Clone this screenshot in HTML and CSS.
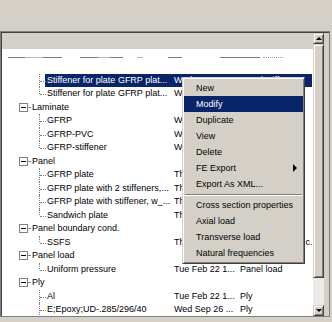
FILE: index.html
```html
<!DOCTYPE html>
<html lang="en">
<head>
    <meta charset="UTF-8">
    <title>Model tree</title>
    <link rel="stylesheet" href="styles.css">
</head>
<body>
    <div class="top"></div>
    <div class="frame">
        <div class="inner">
            <div class="view">
                <div class="header"></div>
                <div class="rows">
                    <div class="ghost">
                        <span class="seg dark" style="width:17px"></span>
                        <span class="seg light" style="width:18px"></span>
                        <span class="seg dark" style="width:19px"></span>
                        <span class="seg gap" style="width:18px"></span>
                        <span class="seg dark" style="width:18px"></span>
                        <span class="seg light" style="width:12px"></span>
                        <span class="seg dark" style="width:13px"></span>
                        <span class="seg gap" style="width:14px"></span>
                        <span class="seg light" style="width:6px"></span>
                        <span class="seg gap" style="width:25px"></span>
                        <span class="seg dark" style="width:14px"></span>
                        <span class="seg gap" style="width:38px"></span>
                        <span class="seg dark" style="width:40px"></span>
                        <span class="seg gap" style="width:3px"></span>
                        <span class="seg dots" style="width:20px"></span>
                    </div>
                    <div class="row sel">
                        <div class="tree"><span class="twig"></span><span class="label">Stiffener for plate GFRP plat...</span></div>
                        <div class="cell">Wed Sep 26 ...</div>
                        <div class="cell">Panel stiff...</div>
                    </div>
                    <div class="row">
                        <div class="tree"><span class="twig last"></span><span class="label">Stiffener for plate GFRP plat...</span></div>
                        <div class="cell">Wed Sep 26 ...</div>
                        <div class="cell">Panel stiff...</div>
                    </div>
                    <div class="row">
                        <div class="tree"><span class="node"><span class="box"></span></span><span class="label">Laminate</span></div>
                        <div class="cell"></div>
                        <div class="cell"></div>
                    </div>
                    <div class="row">
                        <div class="tree"><span class="twig"></span><span class="label">GFRP</span></div>
                        <div class="cell">Wed Sep 26 ...</div>
                        <div class="cell">Laminate</div>
                    </div>
                    <div class="row">
                        <div class="tree"><span class="twig"></span><span class="label">GFRP-PVC</span></div>
                        <div class="cell">Wed Sep 26 ...</div>
                        <div class="cell">Laminate</div>
                    </div>
                    <div class="row">
                        <div class="tree"><span class="twig last"></span><span class="label">GFRP-stiffener</span></div>
                        <div class="cell">Wed Sep 26 ...</div>
                        <div class="cell">Laminate</div>
                    </div>
                    <div class="row">
                        <div class="tree"><span class="node"><span class="box"></span></span><span class="label">Panel</span></div>
                        <div class="cell"></div>
                        <div class="cell"></div>
                    </div>
                    <div class="row">
                        <div class="tree"><span class="twig"></span><span class="label">GFRP plate</span></div>
                        <div class="cell">Thu Mar 10 ...</div>
                        <div class="cell">Panel</div>
                    </div>
                    <div class="row">
                        <div class="tree"><span class="twig"></span><span class="label">GFRP plate with 2 stiffeners,...</span></div>
                        <div class="cell">Thu Mar 10 ...</div>
                        <div class="cell">Panel</div>
                    </div>
                    <div class="row">
                        <div class="tree"><span class="twig"></span><span class="label">GFRP plate with stiffener, w_...</span></div>
                        <div class="cell">Thu Mar 10 ...</div>
                        <div class="cell">Panel</div>
                    </div>
                    <div class="row">
                        <div class="tree"><span class="twig last"></span><span class="label">Sandwich plate</span></div>
                        <div class="cell">Thu Mar 10 ...</div>
                        <div class="cell">Panel</div>
                    </div>
                    <div class="row">
                        <div class="tree"><span class="node"><span class="box"></span></span><span class="label">Panel boundary cond.</span></div>
                        <div class="cell"></div>
                        <div class="cell"></div>
                    </div>
                    <div class="row">
                        <div class="tree"><span class="twig last"></span><span class="label">SSFS</span></div>
                        <div class="cell">Thu Mar 10 ...</div>
                        <div class="cell">Panel boundary c...</div>
                    </div>
                    <div class="row">
                        <div class="tree"><span class="node"><span class="box"></span></span><span class="label">Panel load</span></div>
                        <div class="cell"></div>
                        <div class="cell"></div>
                    </div>
                    <div class="row">
                        <div class="tree"><span class="twig last"></span><span class="label">Uniform pressure</span></div>
                        <div class="cell">Tue Feb 22 1...</div>
                        <div class="cell">Panel load</div>
                    </div>
                    <div class="row">
                        <div class="tree"><span class="node"><span class="box"></span></span><span class="label">Ply</span></div>
                        <div class="cell"></div>
                        <div class="cell"></div>
                    </div>
                    <div class="row">
                        <div class="tree"><span class="twig"></span><span class="label">Al</span></div>
                        <div class="cell">Tue Feb 22 1...</div>
                        <div class="cell">Ply</div>
                    </div>
                    <div class="row">
                        <div class="tree"><span class="twig"></span><span class="label">E;Epoxy;UD-.285/296/40</span></div>
                        <div class="cell">Wed Sep 26 ...</div>
                        <div class="cell">Ply</div>
                    </div>
                </div>
            </div>
            <div class="vscroll">
                <div class="sbtn"><span class="arrow up"></span></div>
                <div class="thumb"></div>
                <div class="track"></div>
                <div class="sbtn"><span class="arrow down"></span></div>
            </div>
        </div>
    </div>

    <div class="menu">
        <div class="item">New</div>
        <div class="item active">Modify</div>
        <div class="item">Duplicate</div>
        <div class="item">View</div>
        <div class="item">Delete</div>
        <div class="item">FE Export <span class="sub"></span></div>
        <div class="item">Export As XML...</div>
        <div class="sep"></div>
        <div class="item">Cross section properties</div>
        <div class="item">Axial load</div>
        <div class="item">Transverse load</div>
        <div class="item">Natural frequencies</div>
    </div>
</body>
</html>
```

FILE: styles.css
```css
body {
    margin: 0;
    width: 332px;
    height: 322px;
    overflow: hidden;
    position: relative;
    background-color: #d4d0c8;
    font-family: "Liberation Sans", Arial, sans-serif;
    font-size: 9px;
    color: #000;
}
.top {
    height: 31px;
}
.frame {
    width: 330px;
    height: 286px;
    box-sizing: border-box;
    border: 1px solid #808080;
}
.inner {
    display: flex;
    height: 100%;
    box-sizing: border-box;
    border-top: 1px solid #404040;
    border-left: 1px solid #404040;
}
.view {
    width: 311px;
    display: flex;
    flex-direction: column;
    background-color: #fff;
}
.header {
    flex: none;
    height: 16px;
    background-color: #d4d0c8;
}
.rows {
    flex: 1;
    min-height: 0;
    overflow: hidden;
}
.ghost {
    display: flex;
    height: 24.5px;
    padding-left: 6px;
    box-sizing: border-box;
    padding-top: 8px;
}
.seg {
    height: 1px;
}
.seg.dark {
    background-color: #7a7a7a;
}
.seg.light {
    background-color: #b8b8b8;
}
.seg.dots {
    border-top: 1px dotted #9a9a9a;
    height: 0;
}
.row {
    display: grid;
    grid-template-columns: 170px 66px 74px;
    height: 13.5px;
    line-height: 13.5px;
    white-space: nowrap;
}
.tree {
    display: flex;
    overflow: hidden;
}
.label {
    flex: 1;
    padding: 0 2px;
    overflow: hidden;
}
.cell {
    padding-left: 2px;
    overflow: hidden;
}
.row.sel .label,
.row.sel .cell {
    background-color: #0a246a;
    color: #fff;
}
.twig {
    flex: none;
    width: 43px;
    position: relative;
}
.twig::before {
    content: "";
    position: absolute;
    left: 37px;
    top: 0;
    bottom: 0;
    border-left: 1px dotted #808080;
}
.twig.last::before {
    bottom: 50%;
}
.twig::after {
    content: "";
    position: absolute;
    left: 38px;
    top: 7px;
    width: 6px;
    border-top: 1px dotted #808080;
}
.node {
    flex: none;
    width: 28px;
    display: flex;
    align-items: center;
    padding-left: 17px;
    box-sizing: border-box;
}
.node::after {
    content: "";
    width: 2px;
    border-top: 1px dotted #808080;
}
.box {
    width: 9px;
    height: 9px;
    box-sizing: border-box;
    border: 1px solid #808080;
    background-color: #fff;
    display: flex;
    align-items: center;
    justify-content: center;
}
.box::before {
    content: "";
    width: 5px;
    height: 1px;
    background-color: #000;
}
.vscroll {
    width: 11px;
    display: flex;
    flex-direction: column;
}
.sbtn, .thumb {
    flex: none;
    box-sizing: border-box;
    background-color: #d4d0c8;
    border: 1px solid;
    border-color: #d4d0c8 #404040 #404040 #d4d0c8;
    box-shadow: inset 1px 1px 0 #fff, inset -1px -1px 0 #808080;
}
.sbtn {
    height: 11px;
    display: flex;
    align-items: center;
    justify-content: center;
}
.thumb {
    height: 234px;
}
.track {
    flex: 1;
    background-color: #ecebe8;
}
.arrow {
    width: 0;
    height: 0;
    border-left: 3px solid transparent;
    border-right: 3px solid transparent;
}
.arrow.up {
    border-bottom: 3px solid #000;
}
.arrow.down {
    border-top: 3px solid #000;
}
.menu {
    position: absolute;
    left: 182px;
    top: 77px;
    width: 123px;
    box-sizing: border-box;
    padding: 2px 1px;
    background-color: #d4d0c8;
    border: 1px solid;
    border-color: #d4d0c8 #404040 #404040 #d4d0c8;
    box-shadow: inset 1px 1px 0 #fff, inset -1px -1px 0 #808080;
}
.item {
    height: 16px;
    line-height: 16px;
    padding-left: 12px;
    display: flex;
    align-items: center;
}
.item.active {
    background-color: #0a246a;
    color: #fff;
}
.sub {
    margin-left: auto;
    margin-right: 6px;
    width: 0;
    height: 0;
    border-left: 4px solid #000;
    border-top: 4px solid transparent;
    border-bottom: 4px solid transparent;
}
.sep {
    margin: 2px 1px 1px;
    border-top: 1px solid #808080;
    border-bottom: 1px solid #fff;
}
```
